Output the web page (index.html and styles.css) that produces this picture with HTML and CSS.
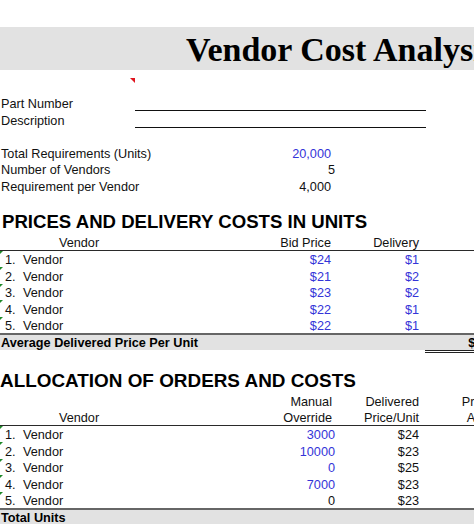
FILE: index.html
```html
<!DOCTYPE html>
<html>
<head>
<meta charset="utf-8">
<link rel="stylesheet" href="styles.css">
</head>
<body>
<div class="sheet">
  <div class="gap-top"></div>
  <div class="title-band"><h1 class="title">Vendor Cost Analysis</h1></div>
  <div class="comment-row"><div class="comment-cell"><span class="comment-mark"></span></div></div>

  <div class="row"><div class="label w135">Part Number</div><div class="fill-line"></div></div>
  <div class="row"><div class="label w135">Description</div><div class="fill-line"></div></div>
  <div class="row"></div>
  <div class="row"><div class="label w200">Total Requirements (Units)</div><div class="val pad blue">20,000</div></div>
  <div class="row"><div class="label w200">Number of Vendors</div><div class="val">5</div></div>
  <div class="row"><div class="label w200">Requirement per Vendor</div><div class="val pad">4,000</div></div>
  <div class="row"></div>

  <h2 class="heading h-prices">PRICES AND DELIVERY COSTS IN UNITS</h2>
  <div class="row head-line">
    <div class="c-vendor center">Vendor</div>
    <div class="c-bid">Bid Price</div>
    <div class="c-del">Delivery</div>
  </div>
  <div class="row vrow"><span class="err-mark"></span><div class="c-vendor"><span class="idx">1.</span>Vendor</div><div class="c-bid blue">$24</div><div class="c-del blue">$1</div></div>
  <div class="row vrow"><span class="err-mark"></span><div class="c-vendor"><span class="idx">2.</span>Vendor</div><div class="c-bid blue">$21</div><div class="c-del blue">$2</div></div>
  <div class="row vrow"><span class="err-mark"></span><div class="c-vendor"><span class="idx">3.</span>Vendor</div><div class="c-bid blue">$23</div><div class="c-del blue">$2</div></div>
  <div class="row vrow"><span class="err-mark"></span><div class="c-vendor"><span class="idx">4.</span>Vendor</div><div class="c-bid blue">$22</div><div class="c-del blue">$1</div></div>
  <div class="row vrow"><span class="err-mark"></span><div class="c-vendor"><span class="idx">5.</span>Vendor</div><div class="c-bid blue">$22</div><div class="c-del blue">$1</div></div>
  <div class="row total-row">
    <div class="total-label">Average Delivered Price Per Unit</div>
    <div class="total-val">$23.17</div>
  </div>
  <div class="dbl-row"><div class="dbl-line"></div></div>

  <h2 class="heading h-alloc">ALLOCATION OF ORDERS AND COSTS</h2>
  <div class="row">
    <div class="c-vendor"></div>
    <div class="c-man head">Manual</div>
    <div class="c-dp">Delivered</div>
    <div class="c-amt">Projected</div>
  </div>
  <div class="row head-line">
    <div class="c-vendor center">Vendor</div>
    <div class="c-man head">Override</div>
    <div class="c-dp">Price/Unit</div>
    <div class="c-amt">Amount</div>
  </div>
  <div class="row vrow"><span class="err-mark"></span><div class="c-vendor"><span class="idx">1.</span>Vendor</div><div class="c-man blue">3000</div><div class="c-dp">$24</div><div class="c-amt"></div></div>
  <div class="row vrow"><span class="err-mark"></span><div class="c-vendor"><span class="idx">2.</span>Vendor</div><div class="c-man blue">10000</div><div class="c-dp">$23</div><div class="c-amt"></div></div>
  <div class="row vrow"><span class="err-mark"></span><div class="c-vendor"><span class="idx">3.</span>Vendor</div><div class="c-man blue">0</div><div class="c-dp">$25</div><div class="c-amt"></div></div>
  <div class="row vrow"><span class="err-mark"></span><div class="c-vendor"><span class="idx">4.</span>Vendor</div><div class="c-man blue">7000</div><div class="c-dp">$23</div><div class="c-amt"></div></div>
  <div class="row vrow"><span class="err-mark"></span><div class="c-vendor"><span class="idx">5.</span>Vendor</div><div class="c-man">0</div><div class="c-dp">$23</div><div class="c-amt"></div></div>
  <div class="row total-row">
    <div class="total-label">Total Units</div>
  </div>
</div>
</body>
</html>
```

FILE: styles.css
```css
html, body {
  margin: 0;
  padding: 0;
  background: #ffffff;
}
body {
  width: 474px;
  height: 524px;
  overflow: hidden;
  font-family: "Liberation Sans", Arial, sans-serif;
  font-size: 12.7px;
  color: #111;
}
.sheet {
  width: 474px;
}
.gap-top {
  height: 27px;
}
.title-band {
  height: 43px;
  background: #e2e2e2;
  box-sizing: border-box;
  padding-left: 186px;
  padding-top: 2px;
  overflow: hidden;
  white-space: nowrap;
}
.title {
  margin: 0;
  font-family: "Liberation Serif", "Times New Roman", serif;
  font-weight: bold;
  font-size: 34px;
  line-height: 41px;
  color: #000;
}
.comment-row {
  height: 24.5px;
}
.comment-cell {
  position: relative;
  width: 135px;
  height: 24.5px;
}
.comment-mark {
  position: absolute;
  top: 8px;
  right: 0;
  width: 0;
  height: 0;
  border-top: 5px solid #e0141e;
  border-left: 5px solid transparent;
}
.row {
  position: relative;
  display: flex;
  align-items: flex-end;
  height: 16.5px;
  line-height: 13px;
  box-sizing: border-box;
  white-space: nowrap;
}
.label {
  padding-left: 1px;
  box-sizing: border-box;
  flex: none;
}
.w135 { width: 135px; }
.w200 { width: 200px; }
.fill-line {
  flex: none;
  width: 291px;
  height: 16.5px;
  box-sizing: border-box;
  border-bottom: 1px solid #111;
}
.val {
  flex: none;
  width: 135px;
  text-align: right;
  box-sizing: border-box;
}
.val.pad { padding-right: 4px; }
.blue { color: #3434d8; }

.heading {
  margin: 0;
  height: 24px;
  line-height: 24px;
  font-size: 18.6px;
  font-weight: bold;
  color: #000;
  white-space: nowrap;
}
.h-prices { padding-left: 2px; }
.h-alloc { margin-top: 16px; padding-left: 0; font-size: 18.9px; }

.head-line {
  border-bottom: 1px solid #2a2a2a;
}
.c-vendor {
  flex: none;
  width: 158px;
  box-sizing: border-box;
}
.center { text-align: center; }
.c-bid {
  flex: none;
  width: 174px;
  text-align: right;
  padding-right: 1px;
  box-sizing: border-box;
}
.c-del {
  flex: none;
  width: 88px;
  text-align: right;
  padding-right: 1px;
  box-sizing: border-box;
}
.c-man {
  flex: none;
  width: 177px;
  text-align: right;
  box-sizing: border-box;
}
.c-man.head { padding-right: 3px; }
.c-dp {
  flex: none;
  width: 85px;
  text-align: right;
  padding-right: 1px;
  box-sizing: border-box;
}
.c-amt {
  flex: none;
  width: 137px;
  text-align: center;
}
.idx {
  display: inline-block;
  width: 23px;
  padding-left: 5px;
  box-sizing: border-box;
}
.err-mark {
  position: absolute;
  top: 0;
  left: 0;
  width: 0;
  height: 0;
  border-top: 3px solid #1f8a2a;
  border-right: 3px solid transparent;
}
.total-row {
  background: #e2e2e2;
  border-top: 2px solid #666;
  font-weight: bold;
  color: #000;
}
.total-label {
  flex: none;
  width: 425px;
  padding-left: 1px;
  box-sizing: border-box;
}
.total-val {
  flex: none;
  width: 82px;
  text-align: right;
}
.dbl-row {
  height: 3px;
}
.dbl-line {
  margin-left: 425px;
  width: 49px;
  height: 1px;
  border-top: 1px solid #222;
  border-bottom: 1px solid #222;
}
```
